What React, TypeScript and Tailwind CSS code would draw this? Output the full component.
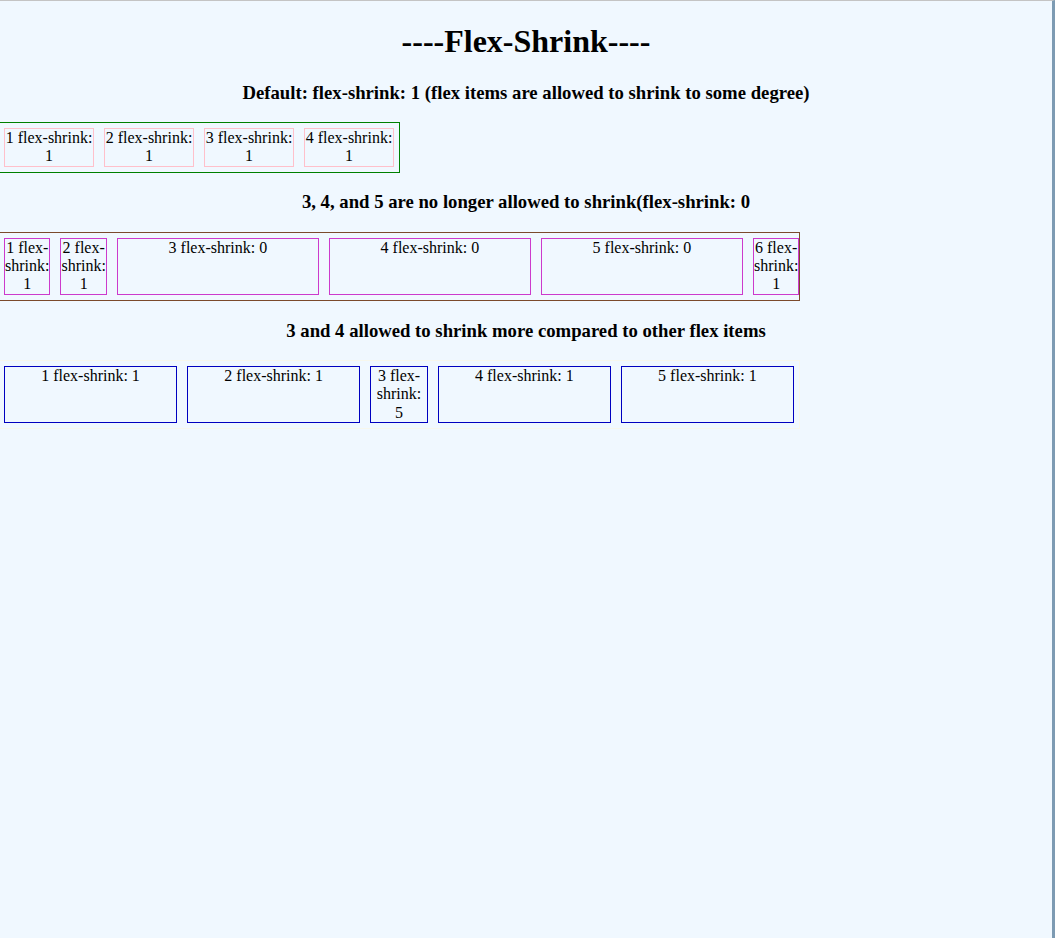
import React from "react";

type Item = { label: string; shrink?: string };

const row1: Item[] = [
  { label: "1 flex-shrink: 1" },
  { label: "2 flex-shrink: 1" },
  { label: "3 flex-shrink: 1" },
  { label: "4 flex-shrink: 1" },
];

const row2: Item[] = [
  { label: "1 flex-shrink: 1" },
  { label: "2 flex-shrink: 1" },
  { label: "3 flex-shrink: 0", shrink: "shrink-0" },
  { label: "4 flex-shrink: 0", shrink: "shrink-0" },
  { label: "5 flex-shrink: 0", shrink: "shrink-0" },
  { label: "6 flex-shrink: 1" },
];

const row3: Item[] = [
  { label: "1 flex-shrink: 1" },
  { label: "2 flex-shrink: 1" },
  { label: "3 flex-shrink: 5", shrink: "shrink-[5]" },
  { label: "4 flex-shrink: 1" },
  { label: "5 flex-shrink: 1" },
];

function Heading({ children }: { children: React.ReactNode }) {
  return (
    <h3 className="text-[18.72px] font-bold text-center my-[18.72px] leading-[1.15]">
      {children}
    </h3>
  );
}

export default function App() {
  return (
    <div className="min-h-screen bg-[#f0f8ff] pt-px border-t border-t-[#c4c4c4] border-r-[3px] border-r-[#7d9bb3] font-['Liberation_Serif',serif] text-black text-base leading-[1.15] overflow-hidden">
      {/* TITLE */}
      <h1 className="text-[32px] font-bold text-center my-[21.44px] leading-[1.15]">
        ----Flex-Shrink----
      </h1>

      {/* DEFAULT */}
      <Heading>Default: flex-shrink: 1 (flex items are allowed to shrink to some degree)</Heading>
      <div className="flex box-content w-[400px] -ml-[2px] border border-solid border-[color:#008000]">
        {row1.map((it) => (
          <div
            key={it.label}
            className="box-content w-[200px] m-[5px] border border-solid border-[color:#ffc0cb] text-center"
          >
            {it.label}
          </div>
        ))}
      </div>

      {/* NO SHRINK */}
      <Heading>3, 4, and 5 are no longer allowed to shrink(flex-shrink: 0</Heading>
      <div className="flex box-content w-[800px] -ml-[2px] border border-solid border-[color:#7b4a2c]">
        {row2.map((it) => (
          <div
            key={it.label}
            className={`box-content w-[200px] m-[5px] border border-solid border-[color:#cc3acc] text-center ${it.shrink ?? ""}`}
          >
            {it.label}
          </div>
        ))}
      </div>

      {/* SHRINK MORE */}
      <Heading>3 and 4 allowed to shrink more compared to other flex items</Heading>
      <div className="flex box-content w-[800px] -ml-[2px] border border-solid border-[color:#f7f7ec]">
        {row3.map((it) => (
          <div
            key={it.label}
            className={`box-content w-[200px] m-[5px] border border-solid border-[color:#0000c0] text-center ${it.shrink ?? ""}`}
          >
            {it.label}
          </div>
        ))}
      </div>
    </div>
  );
}
